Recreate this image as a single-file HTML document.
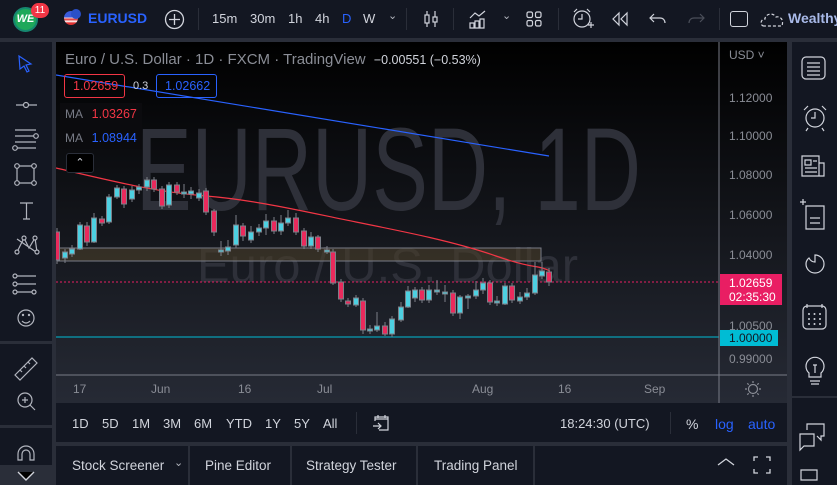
<!DOCTYPE html>
<html><head><meta charset="utf-8"><style>
*{margin:0;padding:0;box-sizing:border-box}
body{width:837px;height:485px;overflow:hidden;background:#2a2e39;font-family:"Liberation Sans",sans-serif;position:relative}
.a{position:absolute;white-space:nowrap}
.top{left:0;top:0;width:837px;height:38px;background:#131722}
.tb{color:#d1d4dc;font-size:13px;top:11px}
.lt{left:0;top:42px;width:52px;height:443px;background:#131722}
.rt{left:792px;top:42px;width:45px;height:443px;background:#131722}
.bb{left:56px;top:403px;width:731px;height:39px;background:#131722}
.bt{color:#d1d4dc;font-size:13px;top:416px}
.tabs{left:56px;top:446px;width:731px;height:39px;background:#131722}
.tab{color:#d1d4dc;font-size:13.5px;top:458px}
.px{color:#8a8d96;font-size:12px;left:729px}
.tx{color:#8a8d96;font-size:12px;top:382px}
</style></head><body>
<div class="a top"></div>
<div class="a" style="left:13px;top:7px;width:25px;height:25px;border-radius:50%;background:#1ea85a;border:2px solid #16876f;color:#fff;font-weight:bold;font-style:italic;font-size:11px;text-align:center;line-height:21px">WE</div>
<div class="a" style="left:31px;top:3px;width:18px;height:15px;border-radius:8px;background:#f23645;color:#fff;font-size:10px;text-align:center;line-height:15px">11</div>
<div class="a" style="left:64px;top:11px;width:14px;height:14px;border-radius:50%;background:linear-gradient(#3b5bdb 45%,#fff 45%,#e03131 60%,#fff 75%,#e03131 85%)"></div>
<div class="a" style="left:71px;top:9px;width:10px;height:10px;border-radius:50%;background:#2b50c8"></div>
<div class="a" style="left:88px;top:10px;color:#2962ff;font-weight:bold;font-size:14px">EURUSD</div>
<svg class="a" style="left:164px;top:9px" width="21" height="21"><circle cx="10.5" cy="10.5" r="9" fill="none" stroke="#d1d4dc" stroke-width="1.3"/><path d="M10.5 5v11M5 10.5h11" stroke="#d1d4dc" stroke-width="1.3"/></svg>
<div class="a" style="left:198px;top:8px;width:1px;height:22px;background:#2a2e39"></div>
<div class="a tb" style="left:212px">15m</div><div class="a tb" style="left:250px">30m</div><div class="a tb" style="left:288px">1h</div><div class="a tb" style="left:315px">4h</div><div class="a tb" style="left:342px;color:#2962ff">D</div><div class="a tb" style="left:363px">W</div>
<div class="a" style="left:388px;top:9px;color:#b2b5be;font-size:11px">⌄</div>
<div class="a" style="left:406px;top:8px;width:1px;height:22px;background:#2a2e39"></div>
<svg class="a" style="left:420px;top:8px" width="22" height="22" fill="none" stroke="#d1d4dc" stroke-width="1.2"><path d="M7 3v16M15 3v16"/><rect x="5" y="7" width="4" height="8" fill="#131722"/><rect x="13" y="9" width="4" height="5" fill="#131722"/></svg>
<div class="a" style="left:453px;top:8px;width:1px;height:22px;background:#2a2e39"></div>
<svg class="a" style="left:467px;top:8px" width="22" height="22" fill="none" stroke="#d1d4dc" stroke-width="1.2"><path d="M3 10l5-5 4 3 6-5"/><path d="M3 20v-5h4v5zM8 20v-7h4v7zM13 20v-9h4v9z"/></svg>
<div class="a" style="left:502px;top:9px;color:#b2b5be;font-size:11px">⌄</div>
<svg class="a" style="left:525px;top:10px" width="18" height="18" fill="none" stroke="#d1d4dc" stroke-width="1.2"><rect x="2" y="2" width="5.5" height="5.5" rx="1.5"/><rect x="10.5" y="2" width="5.5" height="5.5" rx="1.5"/><rect x="2" y="10.5" width="5.5" height="5.5" rx="1.5"/><rect x="10.5" y="10.5" width="5.5" height="5.5" rx="1.5"/></svg>
<div class="a" style="left:558px;top:8px;width:1px;height:22px;background:#2a2e39"></div>
<svg class="a" style="left:571px;top:7px" width="24" height="24" fill="none" stroke="#d1d4dc" stroke-width="1.2"><circle cx="11" cy="12" r="8"/><path d="M11 7v5h-4M3 5l3-3M19 5l-3-3M17 18h6M20 15v6"/></svg>
<svg class="a" style="left:610px;top:10px" width="20" height="18" fill="none" stroke="#d1d4dc" stroke-width="1.2"><path d="M9 3l-6 6 6 6zM17 3l-6 6 6 6z"/></svg>
<svg class="a" style="left:648px;top:10px" width="20" height="18" fill="none" stroke="#d1d4dc" stroke-width="1.2"><path d="M6 4L2 8l4 4M2 8h10c3 0 5 2 5 5"/></svg>
<svg class="a" style="left:686px;top:10px" width="20" height="18" fill="none" stroke="#4a4e59" stroke-width="1.2"><path d="M14 4l4 4-4 4M18 8H8c-3 0-5 2-5 5"/></svg>
<div class="a" style="left:719px;top:8px;width:1px;height:22px;background:#2a2e39"></div>
<div class="a" style="left:730px;top:11px;width:18px;height:16px;border:1.3px solid #d1d4dc;border-radius:3px"></div>
<svg class="a" style="left:759px;top:10px" width="28" height="18" fill="none" stroke="#d1d4dc" stroke-width="1.2" stroke-dasharray="3 2"><path d="M5 16c-4 0-4-7 1-7 0-5 8-7 11-2 4-1 8 2 6 9z"/></svg>
<div class="a" style="left:788px;top:10px;color:#a8b9e8;font-size:14px;font-weight:bold">Wealthy</div>

<div class="a lt"></div>
<div class="a" style="left:0;top:341px;width:52px;height:3px;background:#2a2e39"></div>
<div class="a" style="left:0;top:425px;width:52px;height:3px;background:#2a2e39"></div>
<div class="a" style="left:0;top:465px;width:52px;height:20px;background:#2a2e39"></div>
<svg class="a" style="left:0;top:42px" width="52" height="443" fill="none" stroke="#b2b5be" stroke-width="1.2">
<path d="M19 14l12 8-5 1 3 6-2 1-3-6-4 3z" stroke="#2962ff"/>
<path d="M16 63h21"/><circle cx="26" cy="63" r="2.5" fill="#131722"/>
<path d="M15 88h21M15 94h21M15 100h21M15 106h21"/><circle cx="36" cy="94" r="2.3" fill="#131722"/><circle cx="15" cy="106" r="2.3" fill="#131722"/>
<path d="M17 124h17v17H17z"/><circle cx="17" cy="124" r="2.3" fill="#131722"/><circle cx="34" cy="124" r="2.3" fill="#131722"/><circle cx="17" cy="141" r="2.3" fill="#131722"/><circle cx="34" cy="141" r="2.3" fill="#131722"/>
<path d="M20 161h13M26.5 161v16M23 177h7"/>
<path d="M17 210l7-14 5 10 6-10 2 14M17 197l19 13" /><circle cx="17" cy="210" r="2" fill="#131722"/><circle cx="24" cy="196" r="2" fill="#131722"/><circle cx="35" cy="196" r="2" fill="#131722"/><circle cx="37" cy="210" r="2" fill="#131722"/>
<path d="M15 234h21M15 242h21M15 250h21"/><circle cx="15" cy="234" r="2" fill="#131722"/><circle cx="15" cy="242" r="2" fill="#131722"/><circle cx="15" cy="250" r="2" fill="#131722"/><circle cx="34" cy="250" r="2" fill="#131722"/>
<circle cx="26" cy="276" r="8"/><path d="M22 279q4 4 8 0"/><circle cx="23" cy="273" r=".6" fill="#b2b5be"/><circle cx="29" cy="273" r=".6" fill="#b2b5be"/>
<path d="M15 333l17-17 5 5-17 17zM20 328l2 2M24 324l2 2M28 320l2 2"/>
<circle cx="25" cy="358" r="7"/><path d="M30 363l5 5M25 355v6M22 358h6"/>
<path d="M18 418v-6a8 8 0 0 1 16 0v6h-4v-6a4 4 0 0 0-8 0v6z"/>
</svg>
<svg class="a" style="left:16px;top:470px" width="20" height="15" stroke="#d1d4dc" stroke-width="1.4"><path d="M2 2l8 8 8-8"/></svg>

<svg class="a" style="left:56px;top:42px" width="731" height="361">
<defs><linearGradient id="g" x1="0" y1="0" x2="0" y2="1"><stop offset="0" stop-color="#000"/><stop offset="1" stop-color="#262a35"/></linearGradient></defs>
<rect width="731" height="361" fill="url(#g)"/>
<text x="80" y="168" font-size="118" fill="#2e3039" textLength="505" lengthAdjust="spacingAndGlyphs" font-family="Liberation Sans">EURUSD, 1D</text>
<text x="141" y="240" font-size="48" fill="#2e3039" textLength="381" lengthAdjust="spacingAndGlyphs" font-family="Liberation Sans">Euro / U.S. Dollar</text>
<rect x="1" y="206" width="484" height="13" fill="#4a3d2a" fill-opacity=".6" stroke="#787b86" stroke-width="1"/>
<path d="M0 33 L493 114" stroke="#2962ff" stroke-width="1.2" fill="none"/>
<path d="M0 126 C60 140 100 150 150 154 S250 170 300 180 S400 200 440 214 S480 222 494 229" stroke="#f23645" stroke-width="1.2" fill="none"/>
<line x1="0" y1="240" x2="663" y2="240" stroke="#e91e63" stroke-dasharray="2 2"/>
<line x1="0" y1="295" x2="663" y2="295" stroke="#00bcd4"/>
<line x1="0" y1="333" x2="731" y2="333" stroke="#787b86"/>
<line x1="663" y1="0" x2="663" y2="361" stroke="#787b86"/>
<g transform="translate(-56,-42)" stroke="#7c7f88" stroke-width="1">
<g fill="#ea2a5c">
<path d="M57 228v36M87 222v24M102 216v10M124 186v22M154 177v15M162 186v23M177 182v13M206 188v27M214 209v27M243 223v18M274 217v17M296 213v22M304 228v21M318 235v17M333 249v36M341 279v23M348 298v9M363 298v36M385 322v14M422 287v16M453 290v26M490 280v25M512 283v20M549 268v18"/>
<rect x="54.5" y="232" width="5" height="28"/><rect x="84.5" y="226" width="5" height="16"/><rect x="99.5" y="219" width="5" height="4"/><rect x="121.5" y="189" width="5" height="15"/><rect x="151.5" y="180" width="5" height="9"/><rect x="159.5" y="189" width="5" height="17"/><rect x="174.5" y="185" width="5" height="7"/><rect x="203.5" y="191" width="5" height="21"/><rect x="211.5" y="211" width="5" height="21"/><rect x="240.5" y="226" width="5" height="10"/><rect x="271.5" y="221" width="5" height="10"/><rect x="293.5" y="218" width="5" height="14"/><rect x="301.5" y="231" width="5" height="15"/><rect x="315.5" y="237" width="5" height="12"/><rect x="330.5" y="252" width="5" height="31"/><rect x="338.5" y="282" width="5" height="17"/><rect x="345.5" y="301" width="5" height="3"/><rect x="360.5" y="301" width="5" height="29"/><rect x="382.5" y="326" width="5" height="8"/><rect x="419.5" y="290" width="5" height="10"/><rect x="450.5" y="293" width="5" height="20"/><rect x="487.5" y="283" width="5" height="19"/><rect x="509.5" y="286" width="5" height="14"/><rect x="546.5" y="272" width="5" height="10"/>
</g>
<g fill="#4dd0e1">
<path d="M65 249v14M72 245v12M80 222v28M94 213v30M109 194v30M117 185v14M132 186v16M139 184v10M147 177v14M169 182v26M184 184v14M191 187v12M199 189v12M221 241v15M228 240v15M236 215v33M251 226v17M259 224v12M266 214v21M281 215v20M288 210v16M311 232v17M327 246v8M356 295v12M370 325v9M377 312v20M392 316v21M401 302v20M408 286v22M415 287v15M429 285v18M437 280v15M445 285v17M460 295v24M468 294v15M476 281v18M483 278v16M497 296v10M505 283v22M520 292v12M527 288v12M535 262v33M542 262v17"/>
<rect x="62.5" y="252" width="5" height="6"/><rect x="69.5" y="249" width="5" height="5"/><rect x="77.5" y="225" width="5" height="24"/><rect x="91.5" y="218" width="5" height="24"/><rect x="106.5" y="197" width="5" height="25"/><rect x="114.5" y="188" width="5" height="9"/><rect x="129.5" y="190" width="5" height="9"/><rect x="136.5" y="187" width="5" height="3"/><rect x="144.5" y="180" width="5" height="7"/><rect x="166.5" y="185" width="5" height="20"/><rect x="181.5" y="192" width="5" height="2"/><rect x="188.5" y="191" width="5" height="3"/><rect x="196.5" y="193" width="5" height="5"/><rect x="218.5" y="250" width="5" height="2"/><rect x="225.5" y="247" width="5" height="4"/><rect x="233.5" y="225" width="5" height="20"/><rect x="248.5" y="232" width="5" height="8"/><rect x="256.5" y="228" width="5" height="4"/><rect x="263.5" y="221" width="5" height="7"/><rect x="278.5" y="223" width="5" height="8"/><rect x="285.5" y="218" width="5" height="5"/><rect x="308.5" y="237" width="5" height="9"/><rect x="324.5" y="250" width="5" height="2"/><rect x="353.5" y="298" width="5" height="7"/><rect x="367.5" y="329" width="5" height="2"/><rect x="374.5" y="326" width="5" height="4"/><rect x="389.5" y="319" width="5" height="15"/><rect x="398.5" y="307" width="5" height="13"/><rect x="405.5" y="291" width="5" height="16"/><rect x="412.5" y="290" width="5" height="8"/><rect x="426.5" y="290" width="5" height="10"/><rect x="434.5" y="290" width="5" height="2"/><rect x="442.5" y="292" width="5" height="2"/><rect x="457.5" y="297" width="5" height="16"/><rect x="465.5" y="296" width="5" height="2"/><rect x="473.5" y="290" width="5" height="6"/><rect x="480.5" y="283" width="5" height="7"/><rect x="494.5" y="301" width="5" height="2"/><rect x="502.5" y="286" width="5" height="18"/><rect x="517.5" y="297" width="5" height="4"/><rect x="524.5" y="293" width="5" height="4"/><rect x="532.5" y="275" width="5" height="18"/><rect x="539.5" y="271" width="5" height="5"/>
</g></g>
</svg>
<div class="a" style="left:65px;top:51px;color:#8a8d96;font-size:15px">Euro / U.S. Dollar · 1D · FXCM · TradingView <span style="color:#d1d4dc;font-size:12.5px;margin-left:4px">−0.00551 (−0.53%)</span></div>
<div class="a" style="left:64px;top:74px;width:61px;height:24px;border:1px solid #f23645;border-radius:3px;color:#f23645;font-size:12.5px;line-height:22px;padding-left:8px">1.02659</div>
<div class="a" style="left:133px;top:80px;color:#d1d4dc;font-size:11px">0.3</div>
<div class="a" style="left:156px;top:74px;width:61px;height:24px;border:1px solid #2962ff;border-radius:3px;color:#2962ff;font-size:12.5px;line-height:22px;padding-left:8px">1.02662</div>
<div class="a" style="left:60px;top:103px;width:82px;height:46px;background:#0b0b0e"></div>
<div class="a" style="left:65px;top:107px;color:#787b86;font-size:12px">MA <span style="color:#f23645;margin-left:6px;font-size:12.5px">1.03267</span></div>
<div class="a" style="left:65px;top:131px;color:#787b86;font-size:12px">MA <span style="color:#2962ff;margin-left:6px;font-size:12.5px">1.08944</span></div>
<div class="a" style="left:66px;top:153px;width:28px;height:20px;border:1px solid #2a2e39;border-radius:3px;background:#000;color:#d1d4dc;font-size:11px;text-align:center;line-height:18px">⌃</div>
<div class="a px" style="top:48px">USD ˅</div>
<div class="a px" style="top:91px">1.12000</div>
<div class="a px" style="top:129px">1.10000</div>
<div class="a px" style="top:168px">1.08000</div>
<div class="a px" style="top:208px">1.06000</div>
<div class="a px" style="top:248px">1.04000</div>
<div class="a px" style="top:319px">1.00500</div>
<div class="a px" style="top:352px">0.99000</div>
<div class="a" style="left:720px;top:274px;width:62px;height:31px;background:#e91e63;color:#fff;font-size:12px;line-height:14px;padding:2px 0 0 9px">1.02659<br>02:35:30</div>
<div class="a" style="left:720px;top:330px;width:58px;height:16px;background:#00bcd4;color:#131722;font-size:12px;line-height:16px;padding-left:9px">1.00000</div>
<div class="a tx" style="left:73px">17</div><div class="a tx" style="left:151px">Jun</div><div class="a tx" style="left:238px">16</div><div class="a tx" style="left:317px">Jul</div><div class="a tx" style="left:472px">Aug</div><div class="a tx" style="left:558px">16</div><div class="a tx" style="left:644px">Sep</div>
<svg class="a" style="left:745px;top:381px" width="16" height="16" fill="none" stroke="#8a8d96" stroke-width="1.2"><circle cx="8" cy="8" r="4.5"/><path d="M8 0v2M8 14v2M0 8h2M14 8h2M2.3 2.3l1.4 1.4M12.3 12.3l1.4 1.4M2.3 13.7l1.4-1.4M12.3 3.7l1.4-1.4"/></svg>
<div class="a bb"></div>
<div class="a bt" style="left:72px">1D</div><div class="a bt" style="left:102px">5D</div><div class="a bt" style="left:132px">1M</div><div class="a bt" style="left:163px">3M</div><div class="a bt" style="left:194px">6M</div><div class="a bt" style="left:226px">YTD</div><div class="a bt" style="left:265px">1Y</div><div class="a bt" style="left:294px">5Y</div><div class="a bt" style="left:323px">All</div>
<div class="a" style="left:356px;top:412px;width:1px;height:22px;background:#2a2e39"></div>
<svg class="a" style="left:372px;top:414px" width="18" height="18" fill="none" stroke="#d1d4dc" stroke-width="1.2"><path d="M3 7V3h13v13H7M3 5h13M6 1v3M13 1v3M1 12h8M6 9l3 3-3 3"/></svg>
<div class="a bt" style="left:560px">18:24:30 (UTC)</div>
<div class="a" style="left:670px;top:412px;width:1px;height:22px;background:#2a2e39"></div>
<div class="a bt" style="left:686px;font-size:14px">%</div><div class="a bt" style="left:715px;color:#2962ff;font-size:14px">log</div><div class="a bt" style="left:748px;color:#2962ff;font-size:14px">auto</div>
<div class="a tabs"></div>
<div class="a tab" style="left:72px">Stock Screener</div>
<div class="a" style="left:174px;top:456px;color:#b2b5be;font-size:11px">⌄</div>
<div class="a" style="left:188px;top:446px;width:2px;height:39px;background:#2a2e39"></div>
<div class="a tab" style="left:205px">Pine Editor</div>
<div class="a" style="left:290px;top:446px;width:2px;height:39px;background:#2a2e39"></div>
<div class="a tab" style="left:306px">Strategy Tester</div>
<div class="a" style="left:416px;top:446px;width:2px;height:39px;background:#2a2e39"></div>
<div class="a tab" style="left:434px">Trading Panel</div>
<div class="a" style="left:533px;top:446px;width:2px;height:39px;background:#2a2e39"></div>
<svg class="a" style="left:716px;top:456px" width="20" height="12" fill="none" stroke="#d1d4dc" stroke-width="1.3"><path d="M2 9l8-6 8 6"/></svg>
<svg class="a" style="left:753px;top:456px" width="18" height="18" fill="none" stroke="#d1d4dc" stroke-width="1.3"><path d="M1 5V1h4M13 1h4v4M17 13v4h-4M5 17H1v-4"/></svg>
<div class="a rt"></div>
<svg class="a" style="left:792px;top:42px" width="45" height="443" fill="none" stroke="#d1d4dc" stroke-width="1.2">
<rect x="10" y="15" width="23" height="22" rx="4"/><path d="M15 21h13M15 25h13M15 29h13M15 33h13"/>
<circle cx="23" cy="76" r="9"/><path d="M23 70v6h-4M12 68l4-4M34 68l-4-4M16 86l-2 3M30 86l2 3"/>
<path d="M10 114h17v20H10zM27 121h5v13h-5M13 118h6v5h-6zM21 119h4M13 126h12M13 130h12"/>
<path d="M14 164h18v23H14zM18 176h10M18 181h10M8 160h6M11 157v6"/>
<path d="M23 213a9 9 0 1 1-9 9c0-4 3-6 3-6q2 4 6 4z"/>
<rect x="11" y="264" width="23" height="23" rx="4"/><path d="M15 262v4M30 262v4"/><g fill="#d1d4dc" stroke="none"><circle cx="17" cy="272" r="1"/><circle cx="22.5" cy="272" r="1"/><circle cx="28" cy="272" r="1"/><circle cx="17" cy="277" r="1"/><circle cx="22.5" cy="277" r="1"/><circle cx="28" cy="277" r="1"/><circle cx="17" cy="282" r="1"/><circle cx="22.5" cy="282" r="1"/><circle cx="28" cy="282" r="1"/></g>
<path d="M17 331a9 9 0 1 1 12 0v4h-12zM18 339h10M19 342h8M21 323h4M23 323v8"/>
<path d="M8 392h14v12H12l-4 4zM15 388v-6h17v12h-3v4l-4-4"/>
<path d="M9 428h16v10H9z"/>
</svg>
<div class="a" style="left:792px;top:396px;width:45px;height:2px;background:#2a2e39"></div>
</body></html>
